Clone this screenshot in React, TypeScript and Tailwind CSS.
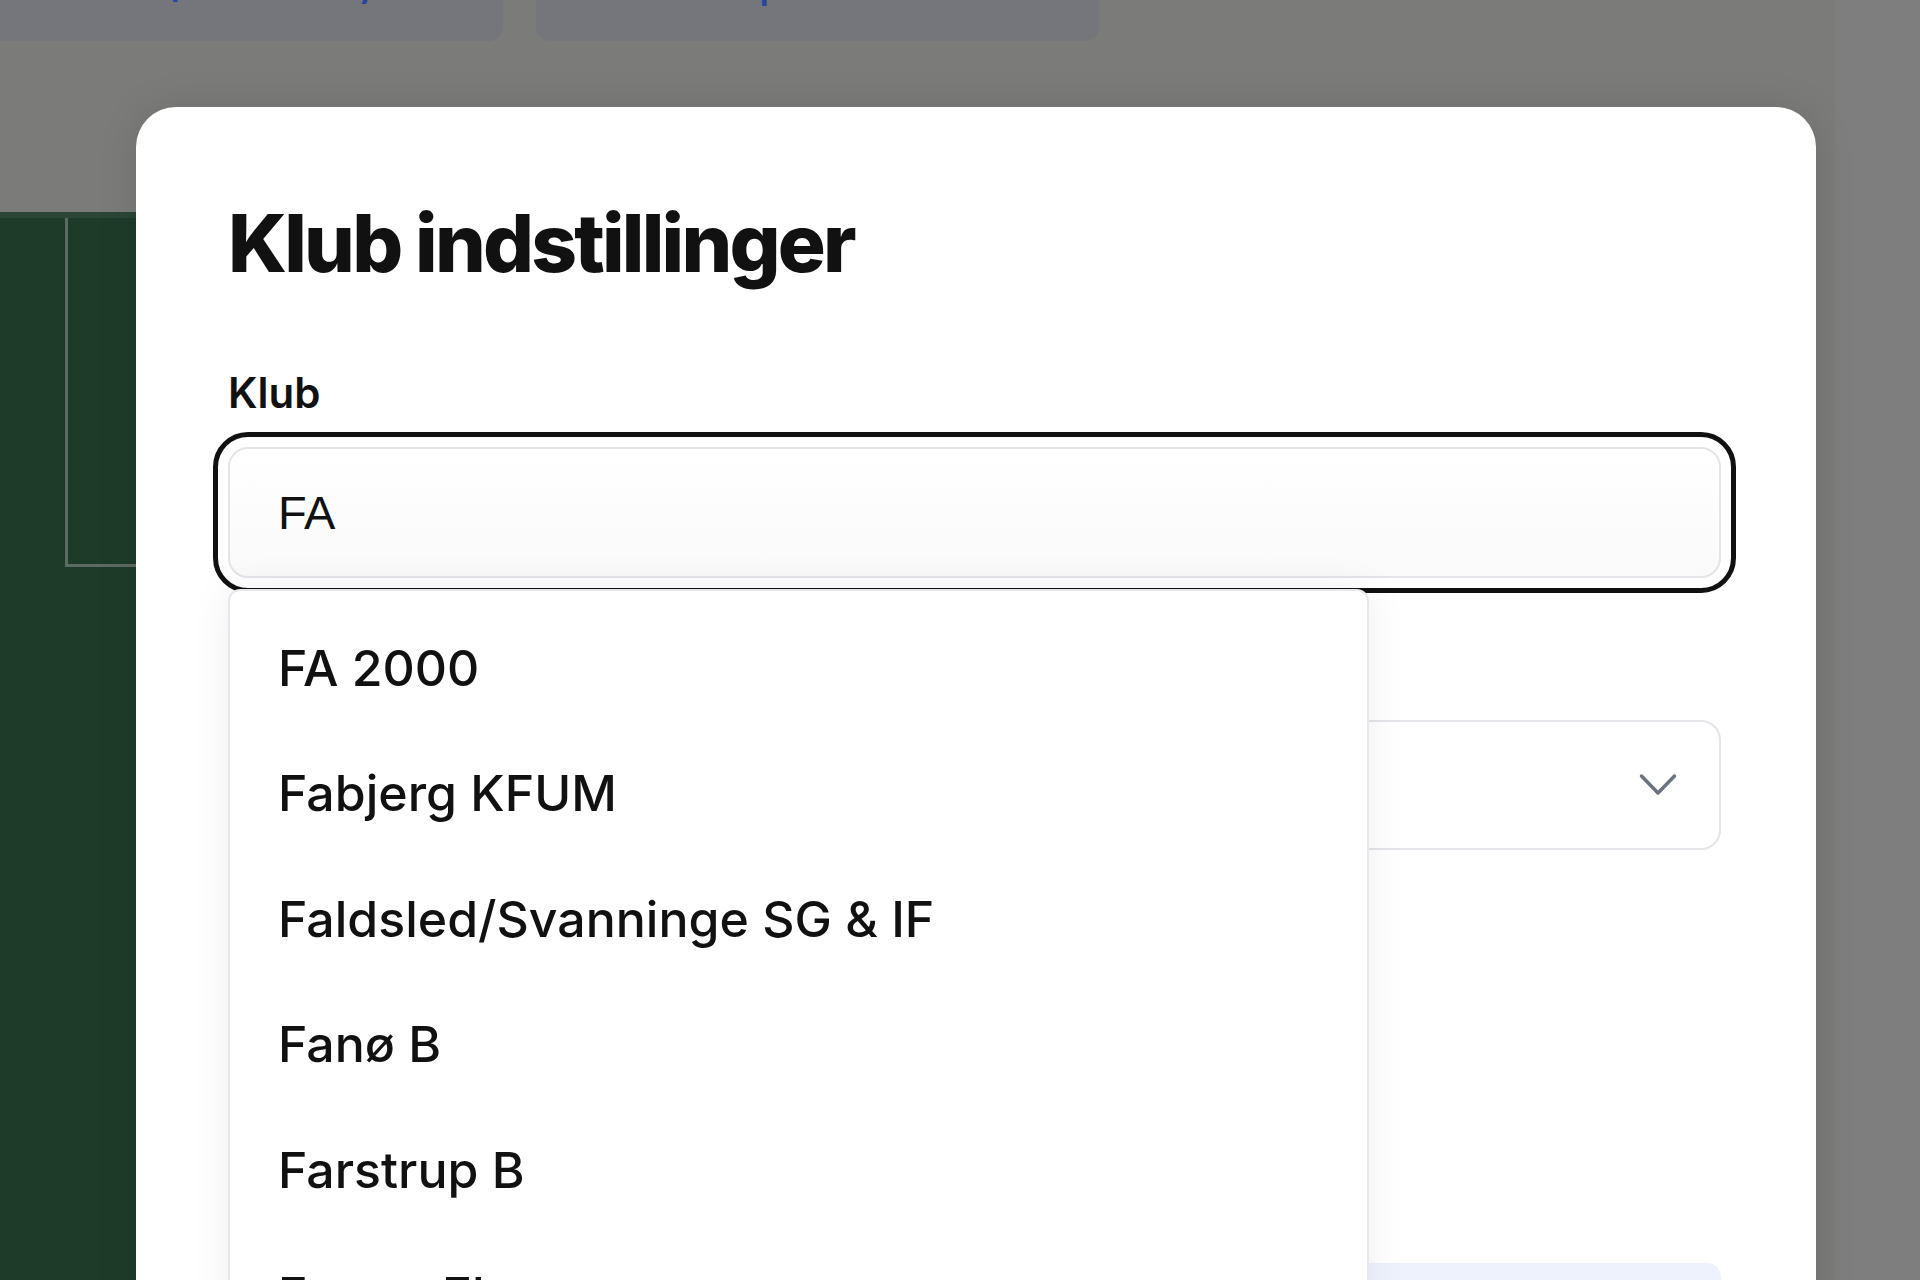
import React from "react";

const items = [
  "FA 2000",
  "Fabjerg KFUM",
  "Faldsled/Svanninge SG & IF",
  "Fanø B",
  "Farstrup B",
  "Farum Ekspres",
];

export default function App() {
  return (
    <div className="relative w-[1920px] h-[1280px] overflow-hidden bg-[#7b7b7a]">
      {/* background page */}
      <div className="flex h-full">
        <div className="flex flex-col w-[1835px] h-full">
          <div className="flex gap-[33px] -mt-[59px] h-[100px] shrink-0">
            <div className="w-[523px] h-full rounded-[14px] bg-[#75767b] -ml-[20px] flex items-end">
              <div className="pl-[96px] pb-[33px] whitespace-nowrap text-[36px] leading-[44px] text-[#2746a3] font-['Inter',sans-serif] font-semibold">
                Hold (U13 Talent)
              </div>
            </div>
            <div className="w-[563px] h-full rounded-[14px] bg-[#75767b] flex items-end">
              <div className="pl-[200px] pb-[33px] whitespace-nowrap text-[36px] leading-[44px] text-[#2746a3] font-['Inter',sans-serif] font-semibold">
                Spillere
              </div>
            </div>
          </div>
          <div className="mt-[171px] flex-1 w-[1700px] bg-[#1e3b2a] border-t-[6px] border-[#2b4536]">
            <div className="ml-[65px] w-[400px] h-[349px] border-l-[3px] border-b-[3px] border-[#5c6b62]" />
          </div>
        </div>
        <div className="flex-1 h-full bg-[#7e7e7e]" />
      </div>

      {/* modal */}
      <div className="absolute left-[136px] top-[107px] w-[1680px] h-[1400px] rounded-[40px] bg-white shadow-[0_0_40px_rgba(0,0,0,0.10)] pl-[92px] pr-[95px] pt-[96px] font-['Inter',sans-serif]">
        <h1 className="text-[80px] leading-none font-extrabold tracking-[-0.035em] text-[#111111]">
          Klub indstillinger
        </h1>
        <div className="mt-[89px] text-[42px] leading-none font-semibold text-[#111111]">Klub</div>
        <div className="relative z-10 mt-[33px]">
          <div className="h-[131px] rounded-[20px] border-2 border-[#e4e5e9] bg-gradient-to-b from-white to-[#fafafb] outline-[5px] outline-solid outline-[#111111] outline-offset-[10px] flex items-center pl-[48px]">
            <span className="text-[47px] leading-none text-[#111111] font-['Liberation_Sans',Arial,sans-serif]">FA</span>
          </div>
          {/* dropdown list */}
          <div className="absolute left-0 top-[142px] w-[1141px] h-[800px] rounded-t-[12px] border-2 border-[#e7e7ec] bg-white shadow-[0_0_40px_rgba(0,0,0,0.07)] pt-[14px]">
            {items.map((it) => (
              <div
                key={it}
                className="h-[125.5px] flex items-center pl-[48px] text-[50px] leading-none font-medium text-[#111111] font-['Inter',sans-serif]"
              >
                {it}
              </div>
            ))}
          </div>
        </div>
        <div className="mt-[142px] h-[130px] rounded-[20px] border-2 border-[#e4e5e9] bg-white flex items-center justify-end pr-[42px]">
          <svg width="38" height="24" viewBox="0 0 38 24" fill="none">
            <polyline points="2.5,3 19,20 35.5,3" stroke="#6b7380" strokeWidth="3.5" strokeLinecap="round" strokeLinejoin="round" />
          </svg>
        </div>
        <div className="mt-[413px] h-[130px] rounded-[14px] bg-[#eef2fc]" />
      </div>
    </div>
  );
}
